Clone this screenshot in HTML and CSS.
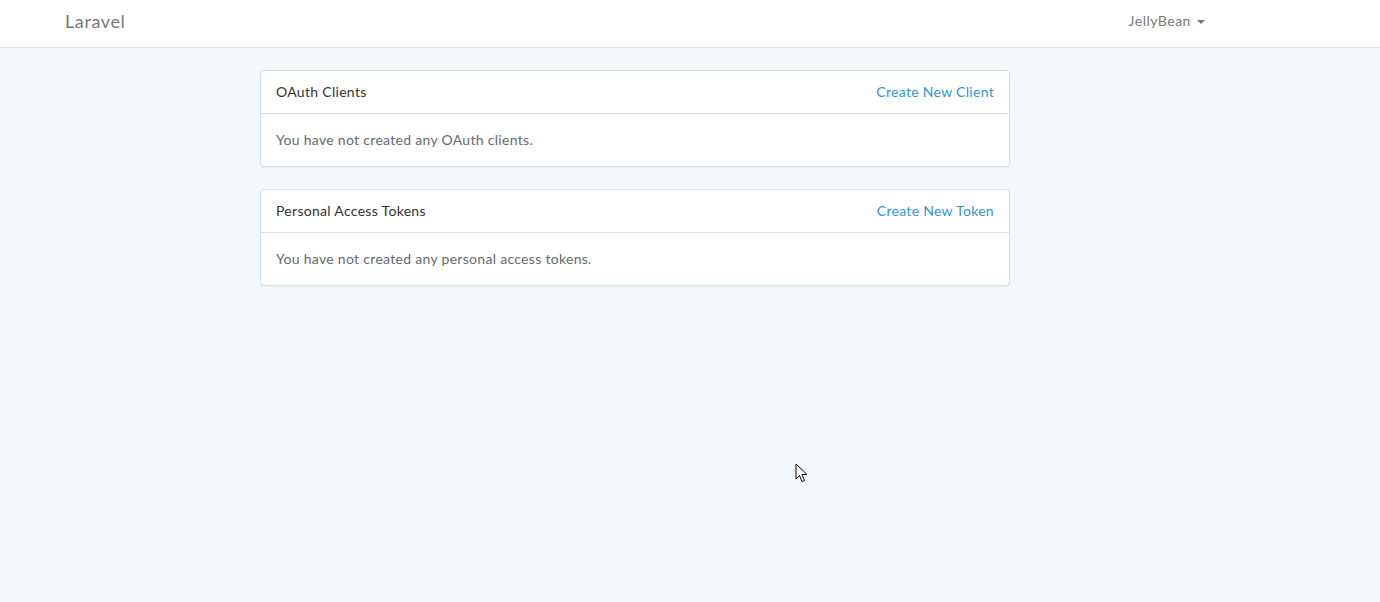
FILE: index.html
```html
<!DOCTYPE html>
<html>
<head>
<meta charset="utf-8">
<link rel="stylesheet" href="styles.css">
</head>
<body>
<nav class="navbar">
  <div class="container nav-inner">
    <a class="brand" href="#">Laravel</a>
    <a class="user" href="#">JellyBean <span class="caret"></span></a>
  </div>
</nav>
<main class="container main">
  <div class="col">
    <section class="panel">
      <div class="panel-heading">
        <span>OAuth Clients</span>
        <a class="action" href="#">Create New Client</a>
      </div>
      <div class="panel-body">You have not created any OAuth clients.</div>
    </section>
    <section class="panel">
      <div class="panel-heading">
        <span>Personal Access Tokens</span>
        <a class="action" href="#">Create New Token</a>
      </div>
      <div class="panel-body">You have not created any personal access tokens.</div>
    </section>
  </div>
</main>
<svg class="cursor" width="14" height="22" viewBox="0 0 14 22"><path d="M1 1 L1 16 L4.5 12.5 L7 18.5 L9.5 17.5 L7 11.5 L12 11.5 Z" fill="#fff" stroke="#000" stroke-width="1"/></svg>
</body>
</html>
```
FILE: styles.css
```css
html, body { margin: 0; padding: 0; }
body {
  background: #f5f8fa;
  font-family: Lato, "Open Sans", sans-serif;
  font-size: 14px;
  line-height: 1.6;
  color: #636b6f;
  letter-spacing: 0.3px;
}
a { text-decoration: none; }
.container { width: 1170px; margin-left: 50px; box-sizing: border-box; }
.navbar {
  background: #fff;
  border-bottom: 1px solid #d3e0e9;
  height: 48px;
  box-sizing: border-box;
}
.nav-inner {
  display: flex;
  justify-content: space-between;
  align-items: flex-start;
  padding-top: 11px;
}
.brand {
  color: #777;
  font-size: 18px;
  padding: 0 15px;
  line-height: 20px;
  letter-spacing: 0.6px;
}
.user {
  color: #777;
  padding: 0 15px;
  line-height: 20px;
  letter-spacing: 0.5px;
}
.caret {
  display: inline-block;
  width: 0; height: 0;
  margin-left: 2px;
  vertical-align: middle;
  border-top: 4px solid #777;
  border-left: 4px solid transparent;
  border-right: 4px solid transparent;
}
.main { padding-top: 22px; }
.col { width: 750px; margin-left: 210px; }
.panel {
  background: #fff;
  border: 1px solid #d3e0e9;
  border-radius: 4px;
  box-shadow: 0 1px 1px rgba(0,0,0,.05);
  margin-bottom: 22px;
}
.panel-heading {
  display: flex;
  justify-content: space-between;
  padding: 10px 15px;
  color: #333;
  border-bottom: 1px solid #d3e0e9;
  line-height: 22px;
}
.action { color: #3097d1; }
.panel-body { padding: 15px; line-height: 22px; }
.cursor { position: absolute; left: 795px; top: 463px; }
```
